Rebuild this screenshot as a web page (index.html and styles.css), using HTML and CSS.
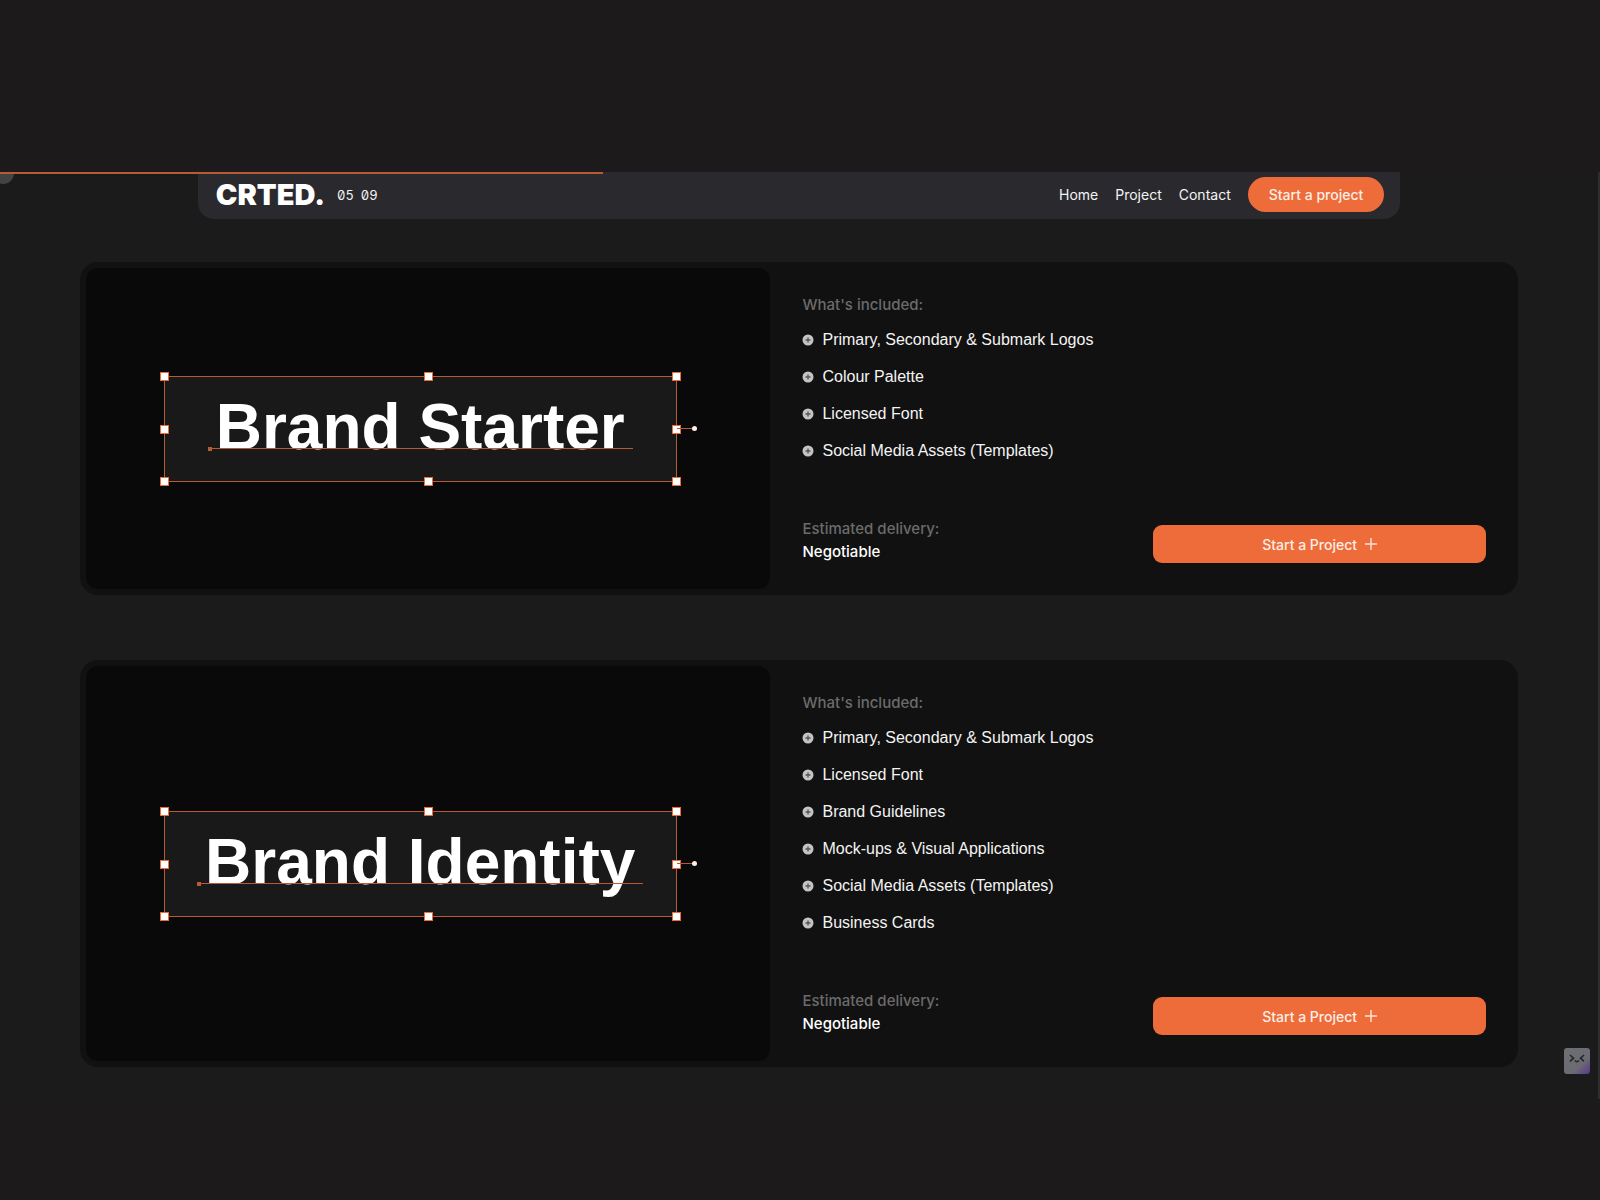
FILE: index.html
```html
<!DOCTYPE html>
<html lang="en">
<head>
<meta charset="utf-8">
<title>CRTED. Packages</title>
<meta name="viewport" content="width=device-width, initial-scale=1">
<link rel="stylesheet" href="styles.css">
</head>
<body>
<svg class="sprite" aria-hidden="true">
  <symbol id="bullet" viewBox="0 0 12 12">
    <circle cx="6" cy="6" r="5.5" fill="#c4c4c4"/>
    <path d="M6 3.5v5M3.5 6h5" stroke="#555" stroke-width="1.3"/>
  </symbol>
  <symbol id="plus" viewBox="0 0 12 12">
    <path d="M6 0v12M0 6h12" stroke="#fbe3d8" stroke-width="1.4"/>
  </symbol>
</svg>
<div class="screen">
  <div class="progress"></div>
  <div class="cursor"></div>
  <header class="nav">
    <a class="logo" href="#">CRTED.</a>
    <div class="clock"><span>05</span><span>09</span></div>
    <nav class="links">
      <a href="#">Home</a>
      <a href="#">Project</a>
      <a href="#">Contact</a>
    </nav>
    <button class="nav-cta" type="button">Start a project</button>
  </header>

  <main class="packages">
    <article class="card">
      <div class="panel">
        <div class="frame">
          <h2 class="title">Brand Starter</h2>
          <i class="handle tl"></i><i class="handle tc"></i><i class="handle tr"></i>
          <i class="handle ml"></i><i class="handle mr"></i>
          <i class="handle bl"></i><i class="handle bc"></i><i class="handle br"></i>
        </div>
        <div class="stub"></div>
      </div>
      <div class="details">
        <h3 class="label">What's included:</h3>
        <ul class="features">
          <li><svg class="bullet"><use href="#bullet"/></svg>Primary, Secondary &amp; Submark Logos</li>
          <li><svg class="bullet"><use href="#bullet"/></svg>Colour Palette</li>
          <li><svg class="bullet"><use href="#bullet"/></svg>Licensed Font</li>
          <li><svg class="bullet"><use href="#bullet"/></svg>Social Media Assets (Templates)</li>
        </ul>
        <div class="footer">
          <dl class="delivery"><dt>Estimated delivery:</dt><dd>Negotiable</dd></dl>
          <button class="cta" type="button">Start a Project<svg class="plus"><use href="#plus"/></svg></button>
        </div>
      </div>
    </article>

    <article class="card">
      <div class="panel">
        <div class="frame">
          <h2 class="title">Brand Identity</h2>
          <i class="handle tl"></i><i class="handle tc"></i><i class="handle tr"></i>
          <i class="handle ml"></i><i class="handle mr"></i>
          <i class="handle bl"></i><i class="handle bc"></i><i class="handle br"></i>
        </div>
        <div class="stub"></div>
      </div>
      <div class="details">
        <h3 class="label">What's included:</h3>
        <ul class="features">
          <li><svg class="bullet"><use href="#bullet"/></svg>Primary, Secondary &amp; Submark Logos</li>
          <li><svg class="bullet"><use href="#bullet"/></svg>Licensed Font</li>
          <li><svg class="bullet"><use href="#bullet"/></svg>Brand Guidelines</li>
          <li><svg class="bullet"><use href="#bullet"/></svg>Mock-ups &amp; Visual Applications</li>
          <li><svg class="bullet"><use href="#bullet"/></svg>Social Media Assets (Templates)</li>
          <li><svg class="bullet"><use href="#bullet"/></svg>Business Cards</li>
        </ul>
        <div class="footer">
          <dl class="delivery"><dt>Estimated delivery:</dt><dd>Negotiable</dd></dl>
          <button class="cta" type="button">Start a Project<svg class="plus"><use href="#plus"/></svg></button>
        </div>
      </div>
    </article>
  </main>

  <button class="chat" type="button" aria-label="Open chat">
    <svg viewBox="0 0 26 26" width="26" height="26" fill="none" stroke="#23262b" stroke-width="1.6">
      <path d="M6 7l3.5 3.2L6 13.4M20 7l-3.500 3.200L20 13.400M11 12.500q2 2.400 4 0"/>
    </svg>
  </button>
</div>
</body>
</html>
```

FILE: styles.css
```css
* { box-sizing: border-box; }

body {
  margin: 0;
  min-height: 100vh;
  padding: 172px 0 100px;
  background: #1c1a1b;
  color: #f4f4f4;
  font-family: "Liberation Sans", Arial, sans-serif;
}

h2, h3, ul, dl, dd { margin: 0; padding: 0; }
a { color: inherit; text-decoration: none; }
button { border: 0; font: inherit; color: #fdeee6; background: #ed6c3a; cursor: pointer; }

.sprite { position: absolute; width: 0; height: 0; }

.screen {
  position: relative;
  overflow: hidden;
  padding-bottom: 32px;
  background: #1b1b1b;
  border-right: 2px solid #2e2e2e;
}

.progress {
  position: absolute;
  top: 0;
  left: 0;
  z-index: 2;
  width: 603px;
  height: 2px;
  background: #b65a38;
}

.cursor {
  position: absolute;
  top: -10px;
  left: -8px;
  width: 22px;
  height: 22px;
  border-radius: 50%;
  background: #434343;
}

.nav {
  display: flex;
  align-items: center;
  width: calc(75% + 4px);
  min-height: 47px;
  margin: 0 auto;
  padding: 5px 16px 7px 18px;
  border-radius: 0 0 16px 16px;
  background: #2a292e;
  font-family: Inter, sans-serif;
  font-size: 14px;
}

.logo {
  color: #fff;
  font-size: 29px;
  line-height: 35px;
  font-weight: 900;
}

.clock {
  display: flex;
  gap: 7px;
  margin-left: 12px;
  font-size: 13px;
  font-feature-settings: "zero", "tnum";
}

.links { display: flex; gap: 17px; margin: 0 17px 0 auto; }

.nav-cta {
  height: 35px;
  padding: 0 21px;
  border-radius: 18px;
  font-weight: 500;
}

.packages {
  display: flex;
  flex-direction: column;
  gap: 65px;
  padding: 43px 80px 0;
}

.card {
  display: grid;
  grid-template-columns: 12fr 13fr;
  padding: 6px;
  border-radius: 18px;
  background: #111;
}

.panel {
  display: flex;
  align-items: center;
  justify-content: center;
  border-radius: 12px;
  background: #090909;
}

.frame {
  position: relative;
  width: 75%;
  height: 106px;
  padding-top: 14px;
  border: 1px solid #b65a38;
  background: #191919;
  text-align: center;
}

.title {
  position: relative;
  display: inline-block;
  padding: 0 8px;
  color: #fff;
  font-size: 64px;
  line-height: 72px;
  font-weight: 700;
  white-space: nowrap;
}

.title::before,
.title::after {
  content: "";
  position: absolute;
  left: 0;
  background: #b65a38;
}
.title::before { right: 0; bottom: 14px; height: 1px; }
.title::after { bottom: 12px; width: 4px; height: 4px; }

.handle {
  position: absolute;
  width: 9px;
  height: 9px;
  border: 1px solid #ed6c3a;
  background: #fff;
}
.tl, .tc, .tr { top: -5px; }
.ml, .mr { top: calc(50% - 4px); }
.bl, .bc, .br { bottom: -5px; }
.tl, .ml, .bl { left: -5px; }
.tc, .bc { left: calc(50% + 4px); }
.tr, .mr, .br { right: -5px; }

.stub {
  position: relative;
  width: 16px;
  height: 1px;
  background: #b65a38;
}
.stub::after {
  content: "";
  position: absolute;
  top: -2px;
  right: -4px;
  width: 5px;
  height: 5px;
  border-radius: 50%;
  background: #ffeee6;
}

.details { padding: 26px 26px 26px 32px; }

.label,
.delivery {
  font-family: Inter, sans-serif;
  font-size: 15px;
  font-weight: 500;
}
.label { line-height: 22px; color: #6b6b6b; }

.features {
  display: flex;
  flex-direction: column;
  gap: 17px;
  margin: 14px 0 56px;
  list-style: none;
  font-size: 16px;
  line-height: 20px;
}
.features li { display: flex; align-items: center; gap: 8px; }
.bullet { width: 12px; height: 12px; }

.footer {
  display: grid;
  grid-template-columns: 1fr 1fr;
  align-items: end;
  gap: 18px;
}
.delivery { line-height: 23px; }
.delivery dt { color: #6b6b6b; }
.delivery dd { color: #fff; }

.cta {
  display: flex;
  align-items: center;
  justify-content: center;
  gap: 8px;
  height: 38px;
  border-radius: 9px;
  font-family: Inter, sans-serif;
  font-size: 14px;
  font-weight: 500;
}
.plus { width: 12px; height: 12px; }

.chat {
  position: absolute;
  right: 8px;
  bottom: 25px;
  width: 26px;
  height: 26px;
  padding: 0;
  border-radius: 3px;
  background: linear-gradient(135deg, #6c6f73 0%, #6c6b73 65%, #56378a 100%);
}
.chat svg { display: block; }
```
